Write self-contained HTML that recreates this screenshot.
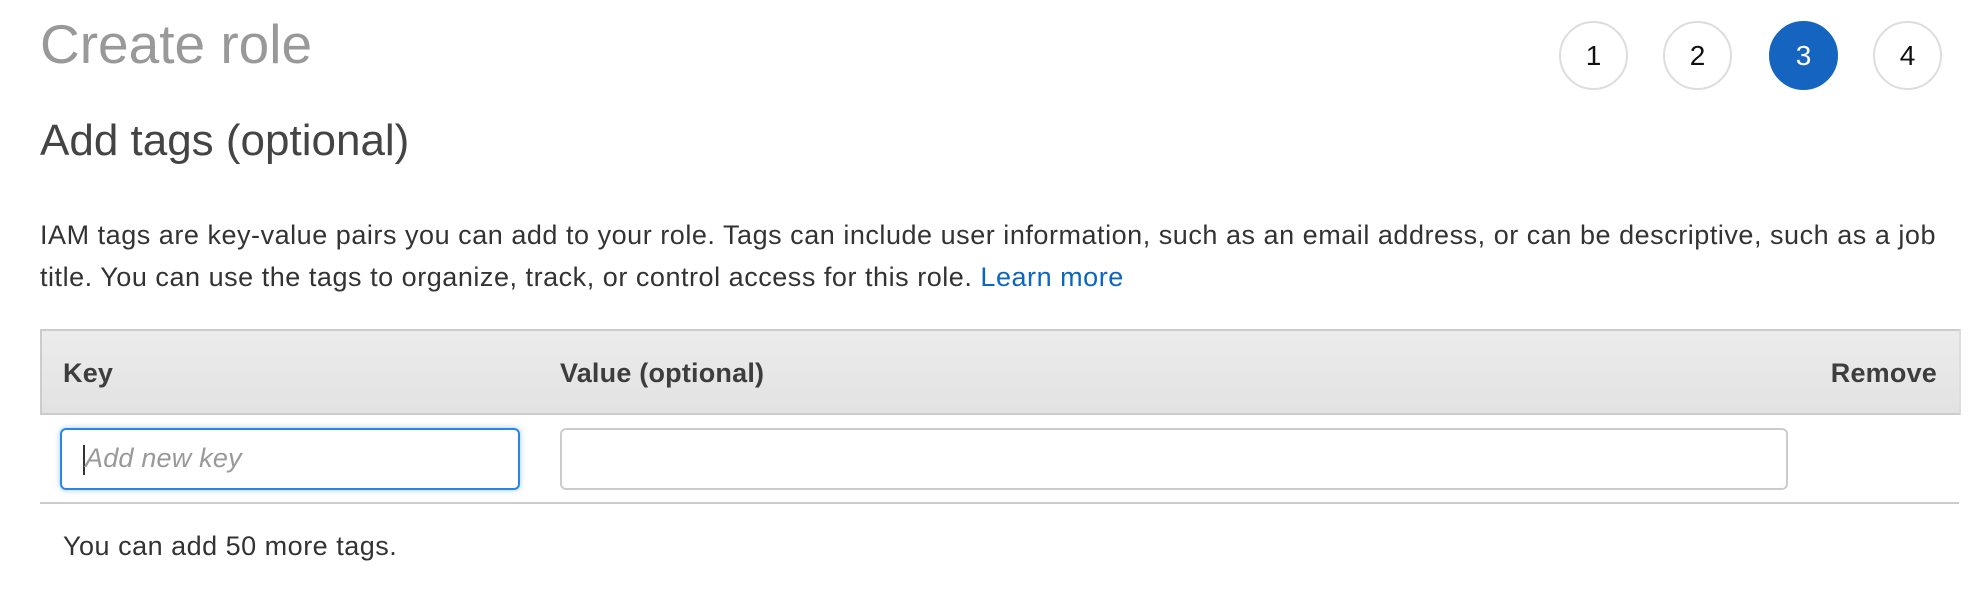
<!DOCTYPE html>
<html><head><meta charset="utf-8"><style>
html,body{margin:0;padding:0;background:#fff;width:1974px;height:609px;overflow:hidden;font-family:"Liberation Sans",Arial,sans-serif;}
.abs{position:absolute;white-space:nowrap;}
h1{position:absolute;left:40px;top:9px;margin:0;font-weight:400;font-size:55px;color:#999;line-height:70px;}
h2{position:absolute;left:40px;top:113px;margin:0;font-weight:400;font-size:44px;color:#444;line-height:56px;}
.c{position:absolute;top:21px;width:65px;height:65px;border:2px solid #ddd;border-radius:50%;text-align:center;line-height:65px;font-size:28px;color:#111;background:#fff;}
.c.on{background:#1565c0;border-color:#1565c0;color:#fff;}
p{position:absolute;left:40px;top:214px;margin:0;width:1930px;font-size:27px;letter-spacing:0.53px;line-height:42px;color:#333;white-space:nowrap;}
a{color:#0b66c3;text-decoration:none;}
.th{position:absolute;left:40px;top:329px;width:1917px;height:82px;border:2px solid #ccc;border-right:2px solid #ddd;background:linear-gradient(#ececec,#e2e2e2);}
.h{position:absolute;top:358px;font-size:27px;letter-spacing:0.2px;font-weight:700;color:#3d3d3d;}
.in{position:absolute;top:428px;height:58px;border:2px solid #ccc;border-radius:6px;background:#fff;}
.in.f{border-color:#2b85e4;box-shadow:0 0 6px rgba(43,133,228,.45);}
.line{position:absolute;left:40px;top:502px;width:1919px;height:2px;background:#ccc;}
</style></head><body>
<h1>Create role</h1>
<div class="c" style="left:1559px">1</div>
<div class="c" style="left:1663px">2</div>
<div class="c on" style="left:1769px">3</div>
<div class="c" style="left:1873px">4</div>
<h2>Add tags (optional)</h2>
<p>IAM tags are key-value pairs you can add to your role. Tags can include user information, such as an email address, or can be descriptive, such as a job<br>title. You can use the tags to organize, track, or control access for this role. <a>Learn more</a></p>
<div class="th"></div>
<div class="h abs" style="left:63px">Key</div>
<div class="h abs" style="left:560px">Value (optional)</div>
<div class="h abs" style="right:37px">Remove</div>
<div class="in f" style="left:60px;width:456px"><span class="abs" style="left:21px;top:15px;width:2px;height:30px;background:#333"></span><span class="abs" style="left:23px;top:13px;font-size:27px;letter-spacing:0.2px;font-style:italic;color:#999">Add new key</span></div>
<div class="in" style="left:560px;width:1224px"></div>
<div class="line"></div>
<div class="abs" style="left:63px;top:531px;font-size:27px;letter-spacing:0.5px;color:#333">You can add 50 more tags.</div>
</body></html>
